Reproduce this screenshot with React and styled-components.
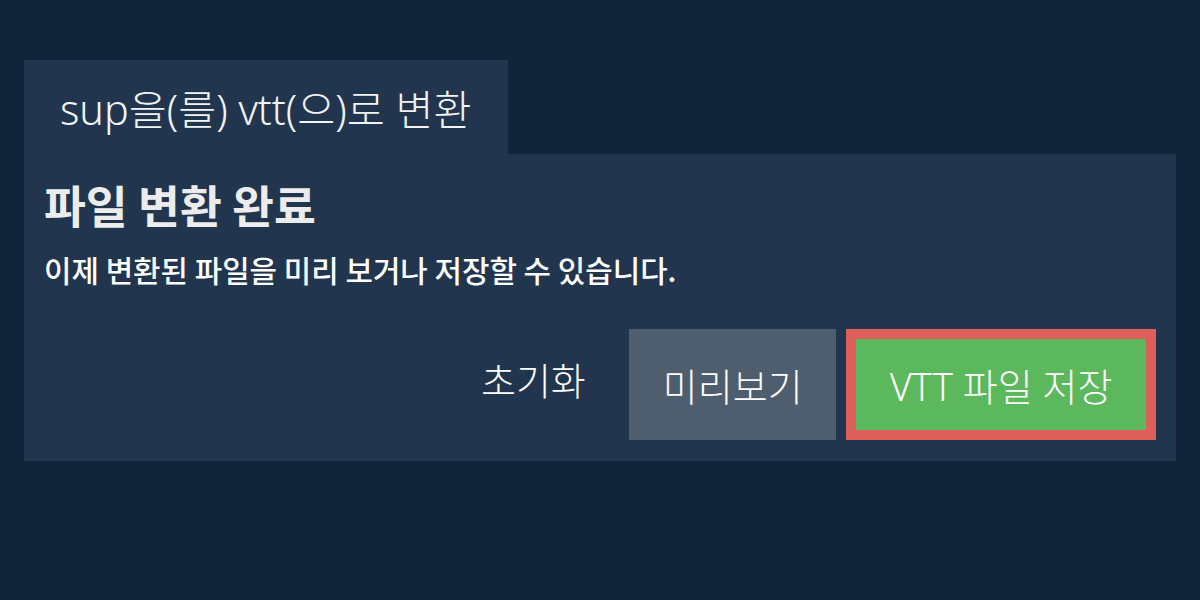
import React from "react";
import styled, { createGlobalStyle } from "styled-components";

const GlobalStyle = createGlobalStyle`
  html, body {
    margin: 0;
    padding: 0;
    background: #10243a;
  }
  body {
    font-family: "Noto Sans", "Noto Sans CJK KR", sans-serif;
    color: #ffffff;
  }
`;

const Page = styled.div`
  width: 1200px;
  height: 600px;
  box-sizing: border-box;
  padding: 60px 24px 0;
  background: #10243a;
`;

const Tab = styled.div`
  display: inline-flex;
  align-items: center;
  height: 94px;
  padding: 0 36px;
  background: #21364e;
  font-family: "Noto Sans", "Noto Sans CJK KR", sans-serif;
  font-weight: 300;
  font-size: 41.3px;
  color: #f2f4f6;
`;

const Panel = styled.div`
  background: #21364e;
  padding: 20px 20px 21px;
`;

const Title = styled.h2`
  margin: 0;
  font-family: "Noto Sans CJK KR", sans-serif;
  font-weight: 700;
  font-size: 45.5px;
  line-height: 60px;
  color: #ececec;
`;

const Message = styled.p`
  margin: 15px 0 0;
  font-family: "Noto Sans CJK KR", sans-serif;
  font-weight: 500;
  font-size: 29.85px;
  line-height: 40px;
  color: #ffffff;
`;

const Actions = styled.div`
  display: flex;
  justify-content: flex-end;
  gap: 10px;
  margin-top: 40px;
`;

const Button = styled.button`
  height: 111px;
  box-sizing: border-box;
  padding: 0 33.5px;
  border: ${(p) => (p.$highlight ? "10px solid #dc5f5b" : "none")};
  background: ${(p) =>
    p.$variant === "primary"
      ? "#5cb85c"
      : p.$variant === "secondary"
      ? "#4e5e6e"
      : "transparent"};
  color: #ffffff;
  font-family: "Noto Sans", "Noto Sans CJK KR", sans-serif;
  font-weight: 300;
  font-size: 38px;
  cursor: pointer;
  padding-bottom: ${(p) => (p.$variant ? "0" : "12px")};
`;

export default function App() {
  return (
    <>
      <GlobalStyle />
      <Page>
        <Tab>sup을(를) vtt(으)로 변환</Tab>
        <Panel>
          <Title>파일 변환 완료</Title>
          <Message>이제 변환된 파일을 미리 보거나 저장할 수 있습니다.</Message>
          <Actions>
            <Button>초기화</Button>
            <Button $variant="secondary">미리보기</Button>
            <Button $variant="primary" $highlight>
              VTT 파일 저장
            </Button>
          </Actions>
        </Panel>
      </Page>
    </>
  );
}
